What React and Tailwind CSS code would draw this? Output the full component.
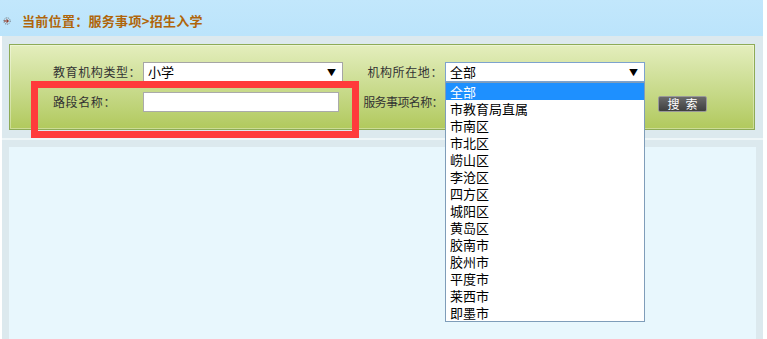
import React from 'react';

const areas = ['全部', '市教育局直属', '市南区', '市北区', '崂山区', '李沧区', '四方区', '城阳区', '黄岛区', '胶南市', '胶州市', '平度市', '莱西市', '即墨市'];

const Arrow = () => (
  <span className="text-[9px] leading-none text-black">▼</span>
);

const Crumb = () => (
  <svg width="8" height="8" viewBox="0 0 8 8" className="shrink-0">
    <circle cx="4" cy="4" r="3.2" fill="none" stroke="#555" strokeWidth="0.8" strokeDasharray="1 1" />
    <path d="M1 4h4M3.5 2.3L5.5 4 3.5 5.7" fill="none" stroke="#8b1a00" strokeWidth="1" />
  </svg>
);

export default function App() {
  return (
    <div
      className="relative w-[767px] h-[339px] overflow-hidden bg-white text-[#333]"
      style={{ fontFamily: '"Noto Sans CJK SC", "Liberation Sans", sans-serif' }}
    >
      <div className="w-[763px] h-full flex flex-col">
        <div className="h-[36px] shrink-0 bg-gradient-to-b from-[#c2e7fc] to-[#bbe4fb] flex items-center gap-[11px] pl-[3px] pt-[6px]">
          <Crumb />
          <span className="text-[13px] font-bold text-[#b0650a] tracking-[0.3px]">当前位置：服务事项&gt;招生入学</span>
        </div>
        <div className="flex-1 ml-[2px] bg-[#dce9ee] flex flex-col">
          <div className="mt-[8px] ml-[7px] w-[746px] h-[86px] border border-[#8dab57] bg-gradient-to-b from-[#e4eebd] to-[#b1c95c] shadow-[inset_0_0_0_1px_rgba(255,255,255,0.35)] pl-[43px] pt-[17px] flex flex-col gap-[10px]">
            <div className="flex items-center h-[20px]">
              <span className="w-[90px] text-[12px] tracking-[0.6px]">教育机构类型：</span>
              <div className="w-[200px] h-[20px] bg-white border border-[#a5a5a5] flex items-center justify-between pl-[4px] pr-[6px] text-[13px] text-black">
                <span>小学</span>
                <Arrow />
              </div>
              <span className="w-[102px] text-right pr-[2px] text-[12px] tracking-[0.6px]">机构所在地：</span>
              <div className="w-[200px] h-[20px] bg-white border border-[#7da2ce] flex items-center justify-between pl-[4px] pr-[6px] text-[13px] text-black">
                <span>全部</span>
                <Arrow />
              </div>
            </div>
            <div className="flex items-center h-[20px]">
              <span className="w-[90px] text-[12px] tracking-[0.6px]">路段名称：</span>
              <div className="w-[196px] h-[20px] bg-white border border-[#aaaaaa]" />
              <span className="w-[106px] text-right pr-[2px] text-[12px] tracking-[-0.6px]">服务事项名称：</span>
              <div className="w-[200px] h-[20px] bg-white border border-[#aaaaaa]" />
              <button className="ml-[13px] mt-[3px] w-[49px] h-[16px] bg-gradient-to-b from-[#6a6a6a] to-[#404040] border border-[#999] rounded-[2px] text-white text-[12px] leading-none tracking-[6px] pl-[6px] flex items-center justify-center">
                搜索
              </button>
            </div>
          </div>
          <div className="mt-[8px] h-[2px] bg-[#eef6f8]" />
          <div className="mt-[7px] ml-[7px] w-[747px] flex-1 bg-[#e8f7fd]" />
        </div>
      </div>

      <div className="absolute left-[445px] top-[82px] w-[200px] h-[240px] bg-white border border-[#7f9db9] flex flex-col">
        {areas.map((a, i) => (
          <div
            key={a}
            className={
              'h-[17px] pl-[4px] flex items-center text-[13px] leading-none overflow-hidden ' +
              (i === 0 ? 'bg-[#1e90ff] text-white' : 'text-black')
            }
          >
            {a}
          </div>
        ))}
      </div>

      <div className="absolute left-[31px] top-[81px] w-[328px] h-[57px] border-[7px] border-[#ff3b3b]" />
    </div>
  );
}
